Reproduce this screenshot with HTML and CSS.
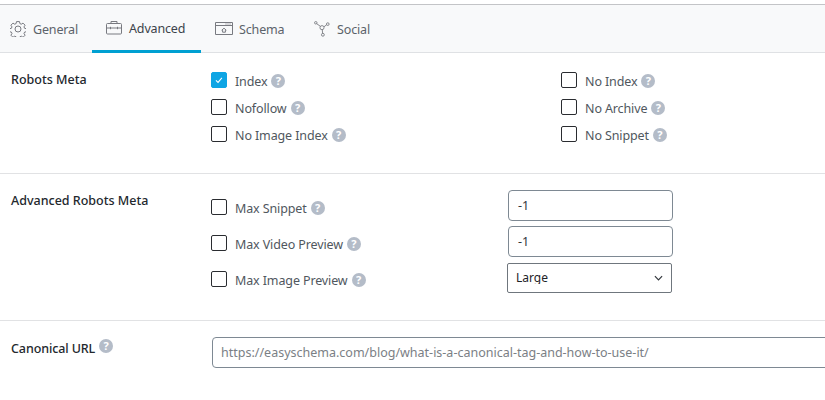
FILE: index.html
```html
<!DOCTYPE html>
<html lang="en">
<head>
<meta charset="utf-8">
<title>Advanced</title>
<link rel="stylesheet" href="styles.css">
</head>
<body>
<nav class="tabs">
  <a class="tab tab-general">
    <svg class="tab-icon tab-icon-gear" viewBox="0 0 16 16"><path d="M6.500.6h3l.4 2 1.400.6 1.700-1.100 2.100 2.100-1.100 1.700.6 1.400 1.900.4v3l-1.900.4-.6 1.400 1.100 1.700-2.100 2.100-1.700-1.100-1.400.6-.4 1.900h-3l-.4-1.900-1.400-.6-1.700 1.100-2.100-2.100 1.100-1.700-.6-1.400-1.900-.4v-3l1.900-.4.6-1.400-1.100-1.700 2.100-2.100 1.700 1.100 1.400-.6z"/><circle cx="8" cy="8" r="3"/></svg>
    <span>General</span>
  </a>
  <a class="tab tab-active">
    <svg class="tab-icon tab-icon-wide" viewBox="0 0 16 15"><rect x=".5" y="3.500" width="15" height="10.500" rx="1"/><path d="M5 3.500V1.500h6v2M.5 8h15M4.500 6.800v2.400M11.500 6.800v2.400"/></svg>
    <span>Advanced</span>
  </a>
  <a class="tab tab-schema">
    <svg class="tab-icon tab-icon-schema" viewBox="0 0 18 13"><rect x=".5" y=".5" width="17" height="12"/><path d="M.5 3.500h17M10.500 2h1M12.500 2h1M14.500 2h1M9 6.200 6.800 8.200h.8v2h2.800v-2h.8z"/></svg>
    <span>Schema</span>
  </a>
  <a class="tab tab-social">
    <svg class="tab-icon tab-icon-social" viewBox="0 0 18 18"><circle cx="2" cy="2" r="1.400"/><circle cx="15.500" cy="3.500" r="1.500"/><circle cx="9" cy="7.500" r="2.300"/><circle cx="10" cy="15.500" r="1.600"/><path d="m3 3 4.300 3.100M11.200 6.500l3-2.200M9.300 9.800l.4 4.100"/></svg>
    <span>Social</span>
  </a>
</nav>

<section class="row row-robots">
  <h3 class="row-label">Robots Meta</h3>
  <div class="robots-grid">
    <label class="check"><span class="box box-on"><svg viewBox="0 0 16 16"><path d="m4.500 8.300 2.400 2.400 4.400-5.200"/></svg></span><span class="check-text">Index</span><i class="help">?</i></label>
    <label class="check"><span class="box"></span><span class="check-text">No Index</span><i class="help">?</i></label>
    <label class="check"><span class="box"></span><span class="check-text">Nofollow</span><i class="help">?</i></label>
    <label class="check"><span class="box"></span><span class="check-text">No Archive</span><i class="help">?</i></label>
    <label class="check"><span class="box"></span><span class="check-text">No Image Index</span><i class="help">?</i></label>
    <label class="check"><span class="box"></span><span class="check-text">No Snippet</span><i class="help">?</i></label>
  </div>
</section>

<section class="row row-advanced">
  <h3 class="row-label">Advanced Robots Meta</h3>
  <div class="advanced-grid">
    <label class="check"><span class="box"></span><span class="check-text">Max Snippet</span><i class="help">?</i></label>
    <div class="field">-1</div>
    <label class="check"><span class="box"></span><span class="check-text">Max Video Preview</span><i class="help">?</i></label>
    <div class="field">-1</div>
    <label class="check"><span class="box"></span><span class="check-text">Max Image Preview</span><i class="help">?</i></label>
    <div class="select"><span class="select-value">Large</span><svg viewBox="0 0 10 6"><path d="m1 1 4 4 4-4"/></svg></div>
  </div>
</section>

<section class="row row-canonical">
  <h3 class="row-label"><span class="canonical-text">Canonical URL</span><i class="help">?</i></h3>
  <div class="url-field">https://easyschema.com/blog/what-is-a-canonical-tag-and-how-to-use-it/</div>
</section>
</body>
</html>
```

FILE: styles.css
```css
* { box-sizing: border-box; }
html, body { margin: 0; padding: 0; }
body {
  width: 825px;
  height: 400px;
  overflow: hidden;
  background: #fff;
  padding-top: 4px;
  font-family: "Noto Sans", "Open Sans", sans-serif;
  font-size: 12.5px;
  color: #50575e;
}
.tabs {
  display: flex;
  height: 49px;
  background: #f8f9fa;
  border-top: 1px solid #c3c4c7;
  border-bottom: 1px solid #dfe1e4;
}
.tab {
  display: flex;
  align-items: center;
  gap: 7px;
  height: 47px;
  padding: 0 15px 0 10px;
  color: #5c636a;
  white-space: nowrap;
}
.tab span { padding-top: 2px; letter-spacing: -0.15px; }
.tab-general { width: 92px; gap: 7px; }
.tab-active {
  width: 109px;
  height: 48px;
  padding: 0 15px 0 14px;
  color: #3c434a;
  border-bottom: 3px solid #00a0d2;
  margin-bottom: -1px;
}
.tab-schema { width: 103px; padding-left: 14px; gap: 6px; }
.tab-social { padding-left: 10px; gap: 7px; }
.tab-icon {
  flex: none;
  width: 15px;
  height: 15px;
  fill: none;
  stroke: #787a80;
  stroke-width: 1;
  stroke-linejoin: round;
}
.tab-icon-gear { width: 16px; height: 16px; }
.tab-icon-wide { width: 16px; height: 15px; }
.tab-icon-schema { width: 18px; height: 13px; }
.tab-icon-social { width: 16px; height: 16px; }
.row { display: flex; border-bottom: 1px solid #e1e2e4; padding-left: 11px; }
.row-label {
  flex: none;
  width: 200px;
  margin: 0;
  font-size: 12.5px;
  line-height: 18px;
  font-weight: 500;
  color: #23282d;
}
.row-robots { height: 121px; padding-top: 18px; }
.robots-grid {
  display: grid;
  grid-template-columns: 350px 200px;
  grid-auto-rows: 27px;
}
.check { display: flex; align-items: center; height: 18px; white-space: nowrap; }
.check-text { padding-top: 2px; letter-spacing: -0.12px; }
.box {
  flex: none;
  display: block;
  width: 16px;
  height: 16px;
  margin-right: 8px;
  border: 1px solid #2a2c30;
  border-radius: 2px;
  background: #fff;
}
.box-on { background: #0ea5e4; border-color: #0ea5e4; }
.box-on svg { display: block; width: 14px; height: 14px; fill: none; stroke: #fff; stroke-width: 1.200; }
.help {
  flex: none;
  display: inline-block;
  width: 14px;
  height: 14px;
  margin: 1px 0 0 4px;
  border-radius: 50%;
  background: #b4bcc8;
  color: #fff;
  font-size: 11px;
  font-style: normal;
  font-weight: 700;
  line-height: 14px;
  text-align: center;
}
.row-advanced { height: 147px; padding-top: 16px; }
.row-advanced .row-label { padding-top: 2px; }
.advanced-grid {
  display: grid;
  grid-template-columns: 297px 166px;
  grid-auto-rows: 31px;
  row-gap: 5px;
  align-items: center;
}
.advanced-grid .check { padding-top: 2px; }
.advanced-grid .check-text { padding-top: 4px; }
.advanced-grid .help { margin-top: 2px; }
.field {
  height: 31px;
  width: 165px;
  padding-left: 9px;
  border: 1px solid #7e8993;
  border-radius: 4px;
  line-height: 29px;
  color: #32373c;
}
.select {
  display: flex;
  align-items: center;
  justify-content: space-between;
  width: 165px;
  height: 30px;
  margin-left: -1px;
  padding: 0 8px;
  border: 1px solid #6f767d;
  border-radius: 2px;
  color: #1d2327;
}
.select-value { display: block; height: 13px; font-size: 12px; line-height: 14px; overflow: hidden; }
.select svg { width: 9px; height: 6px; fill: none; stroke: #32373c; stroke-width: 1.300; }
.row-canonical { border-bottom: 0; padding-top: 16px; }
.row-canonical .row-label { display: flex; align-items: flex-start; padding-top: 3px; }
.canonical-text { letter-spacing: -0.1px; }
.row-canonical .help { margin: -1px 0 0 4px; }
.url-field {
  flex: none;
  width: 640px;
  height: 31px;
  margin-left: 1px;
  padding-left: 8px;
  border: 1px solid #7e8993;
  border-radius: 4px;
  line-height: 29px;
  color: #7b8085;
  white-space: nowrap;
}
```
